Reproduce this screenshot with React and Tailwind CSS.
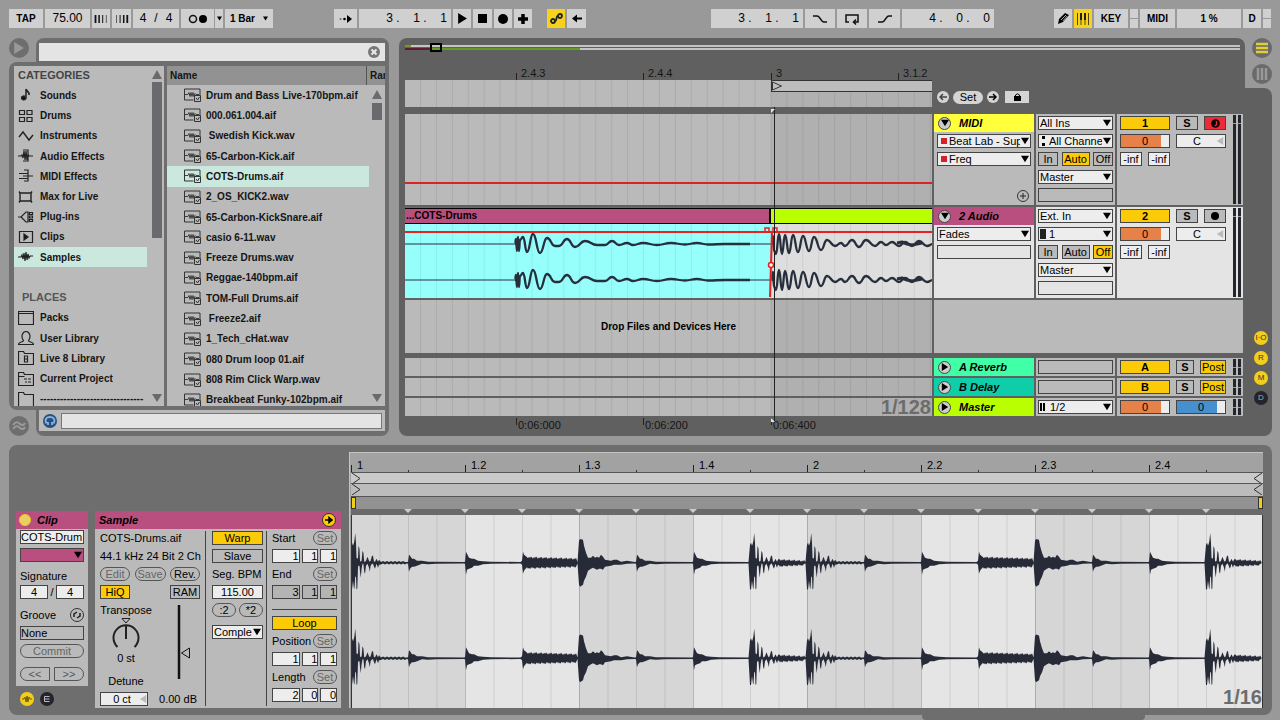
import clsx from 'clsx';

const FILES = [
    'Drum and Bass Live-170bpm.aif',
    '000.061.004.aif',
    '\u00a0Swedish Kick.wav',
    '65-Carbon-Kick.aif',
    'COTS-Drums.aif',
    '2_OS_KICK2.wav',
    '65-Carbon-KickSnare.aif',
    'casio 6-11.wav',
    'Freeze Drums.wav',
    'Reggae-140bpm.aif',
    'TOM-Full Drums.aif',
    '\u00a0Freeze2.aif',
    '1_Tech_cHat.wav',
    '080 Drum loop 01.aif',
    '808 Rim Click Warp.wav',
    'Breakbeat Funky-102bpm.aif',
];

const CATEGORIES = [
    ['Sounds', 'note'],
    ['Drums', 'pads'],
    ['Instruments', 'sine'],
    ['Audio Effects', 'audiofx'],
    ['MIDI Effects', 'midifx'],
    ['Max for Live', 'max'],
    ['Plug-ins', 'plug'],
    ['Clips', 'clip'],
    ['Samples', 'sample'],
];

const PLACES = [
    ['Packs', 'pack'],
    ['User Library', 'user'],
    ['Live 8 Library', 'folder8'],
    ['Current Project', 'project'],
    ['-------------------------------', 'folder'],
];

const ICONS = {
    note: <path d="M8 1v9M8 1c1 3 4 3 3 6M8 10a2.2 1.8 0 1 1-1-1.6" fill="#111" strokeWidth="1.5" />,
    pads: <path d="M1.5 1.5h5v4h-5zM9 1.5h5v4H9zM1.5 8.5h5v4h-5zM9 8.5h5v4H9z" />,
    sine: <path d="M1 8l4-5 6 8 4-5" strokeWidth="1.4" />,
    audiofx: <path d="M0 7h3l1-1 1 3 1-7 1 9 1-9 1 9 1-6 1 2h4M5 1h5v11H5" />,
    midifx: <path d="M1 4.500h9M5 7h10M1 9.500h9M6 1h4v11H6" />,
    max: <path d="M2 3h11v8H2zM2 3L1 1.500M13 3l1-1.500M2 11l-1 1.500M13 11l1 1.500" strokeWidth="1.400" />,
    plug: <path d="M0 7h3l5-5h2v10H8L3 7M11.500 2.500h3v2h-3zM11.500 6h3v2h-3zM11.500 9.500h3v2h-3z" strokeWidth="1.200" />,
    clip: (
        <>
            <path d="M1.500 1.500h13v11h-13z" />
            <path d="M6 4l4 3-4 3z" fill="#111" />
        </>
    ),
    sample: <path d="M0 7h3l1-2 1 4 1-6 1 8 1-9 1 8 1-6 1 4 1-2h3" />,
    pack: <path d="M.5 .5h15v13H.5zM.5 2.500h15" />,
    user: <path d="M.5 13.500h15c0-3-5-2-5-4 3-4 1-9-2.500-9s-5.500 5-2.500 9c0 2-5 1-5 4z" />,
    folder8: (
        <>
            <path d="M.5 13.500V.5h5l1 2h9v11z" />
            <path d="M6.500 5h3v6h-3zM6.500 8h3" />
        </>
    ),
    project: <path d="M.5 13.500V.5h5l1 2h9v11zM.5 4.500h6M6 7h3M10 7h3M7 10h2M10 10h3" />,
    folder: <path d="M.5 14V.5h5l1 2h9V14" />,
};

const Icon = ({ name }) => (
    <svg width="16" height="14" viewBox="0 0 16 14" fill="none" stroke="#222" strokeWidth="1.2" className="shrink-0">
        {ICONS[name]}
    </svg>
);

const FileIcon = () => (
    <svg width="18" height="14" viewBox="0 0 18 14" fill="none" stroke="#333" className="shrink-0">
        <path d="M.5 1h15.500v6M.5 1v11h9" />
        <path d="M1 6.500h3l1-2 1 4 1-4 1 4 1-4 1 4 1-3 1 1h3" strokeWidth=".9" />
        <path d="M10.500 7.500h6v6h-6zM12 10l1.500 2 2-3" />
    </svg>
);

const Triangle = ({ dir = 'down', className = 'size-[9px] fill-black' }) => {
    const d = { down: 'M0 1h10L5 9z', up: 'M0 9h10L5 0z', right: 'M1 0v10l8-5z', left: 'M9 0v10L1 5z' }[dir];
    return (
        <svg viewBox="0 0 10 10" className={clsx('shrink-0', className)}>
            <path d={d} />
        </svg>
    );
};

/* ---------- transport bar ---------- */

const Tb = ({ className, label, children, on }) => (
    <button
        aria-label={label}
        className={clsx('h-[19px] flex items-center justify-center text-[10px] font-bold shrink-0', on ? 'bg-[#f6d21c]' : 'bg-[#d0d0d0]', className)}
    >
        {children}
    </button>
);

const BeatField = ({ values }) => (
    <div className="h-[19px] w-[92px] bg-[#d0d0d0] flex justify-end text-[12px] leading-[19px] pr-1">
        <span className="w-[27px]">{values[0]} .</span>
        <span className="w-[27px]">{values[1]} .</span>
        <span>{values[2]}</span>
    </div>
);

const Stroke = ({ d, w = 16 }) => (
    <svg width={w} height="12" viewBox={`0 0 ${w} 12`} fill="none" stroke="#111" strokeWidth="1.5">
        <path d={d} />
    </svg>
);

const NudgeBars = ({ weights }) => (
    <svg width="14" height="10" viewBox="0 0 14 10" stroke="#111">
        {weights.map((w, i) => (
            <path key={i} d={`M${1.500 + i * 3.600} 1v8`} strokeWidth={w} />
        ))}
    </svg>
);

const SplitLed = () => (
    <div className="w-2 h-[19px] flex flex-col gap-px shrink-0">
        <i className="flex-1 bg-[#d0d0d0]" />
        <i className="flex-1 bg-[#d0d0d0]" />
    </div>
);

const Transport = () => (
    <header className="flex justify-between px-[9px] pt-[9px] pb-[10px]">
        <div className="flex gap-[61px]">
            <div className="flex gap-[2px]">
                <Tb className="w-[34px]">TAP</Tb>
                <div className="w-[45px] h-[19px] bg-[#d0d0d0] text-[12px] leading-[19px] text-center">75.00</div>
                <Tb label="Nudge down" className="w-[18px]">
                    <NudgeBars weights={[1.8, 1.5, 1, 0.6]} />
                </Tb>
                <Tb label="Nudge up" className="w-[19px]">
                    <NudgeBars weights={[0.6, 1, 1.5, 1.8]} />
                </Tb>
                <div className="w-[46px] h-[19px] bg-[#d0d0d0] text-[12px] leading-[19px] flex justify-center gap-2">
                    <span>4</span>
                    <span>/</span>
                    <span>4</span>
                </div>
                <div className="flex gap-px">
                    <Tb label="Metronome" className="w-[33px]">
                        <svg width="20" height="10" viewBox="0 0 20 10">
                            <circle cx="5" cy="5" r="3.500" fill="none" stroke="#111" strokeWidth="1.500" />
                            <circle cx="15" cy="5" r="4" />
                        </svg>
                    </Tb>
                    <Tb label="Metronome options" className="w-2">
                        <Triangle className="size-[5px] fill-black" />
                    </Tb>
                </div>
                <Tb className="w-[48px] gap-2">
                    1 Bar
                    <Triangle className="size-[5px] fill-black" />
                </Tb>
            </div>
            <div className="flex gap-[15px]">
                <div className="flex gap-[2px]">
                    <Tb label="Follow" className="w-[23px]">
                        <svg width="13" height="8" viewBox="0 0 13 8">
                            <path d="M8 0l5 4-5 4z" />
                            <circle cx="5.500" cy="4" r="1.300" />
                            <circle cx="1.500" cy="4" r="1" fill="#666" />
                        </svg>
                    </Tb>
                    <BeatField values={[3, 1, 1]} />
                    <Tb label="Play" className="w-[18px]">
                        <Triangle dir="right" className="size-[11px] fill-black" />
                    </Tb>
                    <Tb label="Stop" className="w-[19px]">
                        <i className="size-[9px] bg-black" />
                    </Tb>
                    <Tb label="Record" className="w-[18px]">
                        <i className="size-[10px] rounded-full bg-black" />
                    </Tb>
                    <Tb label="Overdub" className="w-[18px]">
                        <svg width="10" height="10" viewBox="0 0 10 10" stroke="#000" strokeWidth="3.500">
                            <path d="M5 0v10M0 5h10" />
                        </svg>
                    </Tb>
                </div>
                <div className="flex gap-[2px]">
                    <Tb on label="Automation arm" className="w-[18px]">
                        <svg width="13" height="11" viewBox="0 0 13 11" fill="none" stroke="#222" strokeWidth="1.800">
                            <circle cx="3" cy="8" r="2" />
                            <circle cx="10" cy="3" r="2" />
                            <path d="M5 8c2 0 1-5 3-5" />
                        </svg>
                    </Tb>
                    <Tb label="Back to arrangement" className="w-[19px]">
                        <svg width="10" height="9" viewBox="0 0 10 9">
                            <path d="M0 4.500L5 .5v3h5v2H5v3z" />
                        </svg>
                    </Tb>
                </div>
            </div>
        </div>
        <div className="flex gap-[60px]">
            <div className="flex gap-[2px]">
                <BeatField values={[3, 1, 1]} />
                <Tb label="Punch in" className="w-[30px]">
                    <Stroke d="M1 3h4q1 0 2 1l3 4q1 1 2 1h3" />
                </Tb>
                <Tb label="Loop" className="w-[30px]">
                    <Stroke d="M5 9H2V2h12v7h-4M12 6.500L9.500 9l2.500 2.500" />
                </Tb>
                <Tb label="Punch out" className="w-[31px]">
                    <Stroke d="M1 9h4q1 0 2-1l3-4q1-1 2-1h3" />
                </Tb>
                <BeatField values={[4, 0, 0]} />
            </div>
            <div className="flex gap-[2px]">
                <Tb label="Draw mode" className="w-[18px]">
                    <svg width="13" height="13" viewBox="0 0 13 13">
                        <path d="M1 12l1-5 6-6 4 2-6 7z" />
                        <path d="M4 8l5-5M6 9l4-5" stroke="#ccc" strokeWidth=".8" />
                    </svg>
                </Tb>
                <Tb on label="Computer MIDI keyboard" className="w-[18px]">
                    <svg width="12" height="12" viewBox="0 0 12 12" stroke="#222">
                        <path d="M.5 0v12M4 6v6M8 6v6M11.500 0v12" strokeWidth=".8" />
                        <path d="M4 0v7M8 0v7" strokeWidth="2" />
                    </svg>
                </Tb>
                <Tb className="w-[34px]">KEY</Tb>
                <SplitLed />
                <Tb className="w-[35px]">MIDI</Tb>
                <div className="w-[64px] h-[19px] bg-[#d0d0d0] text-[10px] font-bold leading-[19px] text-center">1 %</div>
                <Tb className="w-[18px]">D</Tb>
                <SplitLed />
            </div>
        </div>
    </header>
);

/* ---------- browser ---------- */

const NavRow = ({ item, active }) => (
    <li className={clsx('flex items-center gap-[6px] pl-1 mr-[14px]', active && 'bg-[#cbe8df]')}>
        <Icon name={item[1]} />
        <a href="#" className="whitespace-nowrap">{item[0]}</a>
    </li>
);

const Browser = () => (
    <aside className="w-[380px] shrink-0 flex flex-col text-[10px] font-bold text-[#151515]">
        <div className="flex justify-between">
            <button aria-label="Show browser" className="size-5 rounded-full bg-[#6e6e6e] flex items-center justify-center">
                <Triangle dir="right" className="size-3 fill-[#999]" />
            </button>
            <div className="w-[353px] bg-[#6e6e6e] rounded-t-lg pt-[5px] px-[3px] h-[24px] pr-[4px]">
                <div className="relative">
                    <input aria-label="Search" className="block w-full h-[18px] bg-[#e4e4e4] px-2" />
                    <button aria-label="Clear search" className="absolute right-[5px] top-[3px] size-3 rounded-full bg-[#777]">
                        <svg viewBox="0 0 12 12" stroke="#eee" strokeWidth="1.800">
                            <path d="M3.500 3.500l5 5M8.500 3.500l-5 5" />
                        </svg>
                    </button>
                </div>
            </div>
        </div>
        <div className="flex bg-[#6e6e6e] rounded-l-lg py-1 pl-[5px] pr-[4px] gap-[3px]">
            <nav className="w-[150px] h-[340px] bg-[#bababa] flex overflow-hidden">
                <ul className="flex-1 min-w-0 h-[344px] -mt-px grid auto-rows-fr mr-[-12px]">
                    <li className="flex items-center pl-1 text-[11px] text-[#444]">CATEGORIES</li>
                    {CATEGORIES.map((c) => <NavRow key={c[0]} item={c} active={c[0] === 'Samples'} />)}
                    <li />
                    <li className="flex items-center pl-2 text-[11px] text-[#555]">PLACES</li>
                    {PLACES.map((c) => <NavRow key={c[0]} item={c} />)}
                </ul>
                <div className="w-[15px] flex flex-col items-center pt-1 pb-[3px]">
                    <Triangle dir="up" className="size-[10px] fill-[#6a6a6e]" />
                    <i className="mt-[2px] w-[10px] h-[156px] bg-[#6a6a6e]" />
                    <Triangle className="mt-auto size-[10px] fill-[#6a6a6e]" />
                </div>
            </nav>
            <div className="flex-1 h-[340px] bg-[#bababa] overflow-hidden">
                <div className="flex h-[19px] leading-[20px] bg-[#929292]">
                    <span className="flex-1 pl-[3px]">Name</span>
                    <span className="w-[19px] pl-[3px] border-l border-[#555] overflow-hidden">Ran</span>
                </div>
                <div className="flex h-[321px]">
                    <ul className="flex-1 h-[325px] grid auto-rows-fr">
                        {FILES.map((f) => (
                            <li key={f} className={clsx('flex items-center gap-1 pl-[17px] whitespace-nowrap', f === 'COTS-Drums.aif' && 'bg-[#cbe8df]')}>
                                <FileIcon />
                                {f}
                            </li>
                        ))}
                    </ul>
                    <div className="w-[16px] flex flex-col items-center pt-[5px] pb-[3px]">
                        <Triangle dir="up" className="size-[10px] fill-[#6a6a6e]" />
                        <i className="mt-[3px] w-[10px] h-[17px] bg-[#6a6a6e]" />
                        <Triangle className="mt-auto size-[10px] fill-[#6a6a6e]" />
                    </div>
                </div>
            </div>
        </div>
        <div className="flex justify-between items-end">
            <button aria-label="Groove pool" className="size-5 rounded-full bg-[#6e6e6e]">
                <svg viewBox="0 0 20 20" fill="none" stroke="#999" strokeWidth="2">
                    <path d="M4 9c3-4 5-3 7-1s4 1 5-1M4 13c3-4 5-3 7-1s4 1 5-1" />
                </svg>
            </button>
            <div className="w-[353px] bg-[#6e6e6e] rounded-b-lg pb-[5px] pl-[3px] pr-[4px]">
                <div className="h-[21px] bg-[#bababa] flex items-center gap-1 pl-[4px] pr-[3px]">
                    <button aria-label="Preview" className="size-[14px] rounded-full bg-[#2c4e78]">
                        <svg viewBox="0 0 14 14" fill="none" stroke="#7fb6e8" strokeWidth="1.800">
                            <path d="M3.500 9.500C1 5 4 3 7 3s6 2 3.500 6.500M5 8v3M9 8v3" />
                        </svg>
                    </button>
                    <input aria-label="Preview file" className="flex-1 h-4 bg-[#e4e4e4] border border-[#777]" />
                </div>
            </div>
        </div>
    </aside>
);

/* ---------- arrangement ---------- */

// Horizontal-tangent curve through [x, dy] extremes around a centre line.
const curve = (pts, mid) => pts.reduce((d, [x, dy], i) => {
    const y = mid + dy;
    if (i === 0) return `M${x} ${y}`;
    const [px, pdy] = pts[i - 1];
    const cx = (px + x) / 2;
    return `${d}C${cx} ${mid + pdy} ${cx} ${y} ${x} ${y}`;
}, '');

const TAIL = [[110, 0], [111, -5], [112, 7], [113, -7], [114, 7], [115, -4], [118, -7], [122, 8], [128, -10], [135, 9], [142, -6], [150, 2], [154, 2], [162, -5], [170, 3], [180, -3], [192, 1], [200, 1], [207, -3], [214, 1], [222, -1], [228, 1], [238, -1], [252, 1], [266, -1], [280, 0.500], [292, -1], [303, 0.500], [320, 0], [345, 0]];
const HEAD = [[0, 0], [1, -8], [2, 7], [4, 10], [7, -10], [10, 10], [13, -9], [17, 9], [21, -9], [26, 8], [31, -8], [37, 7], [42, -7], [49, 6], [55, -4], [63, 2], [69, -1], [73, 2], [80, -4], [87, 3], [94, -4], [103, 2], [109, -2], [114, 1], [120, -2], [127, 2], [133, -2], [140, 2], [147, -3], [155, 2], [161, 0]];

const LaneGrid = () => (
    <svg viewBox="0 0 527 10" preserveAspectRatio="none" className="absolute inset-0 w-full h-full" stroke="#000" strokeOpacity=".08">
        <rect x="366" width="161" height="10" fillOpacity=".05" stroke="none" />
        {Array.from({ length: 33 }, (_, i) => (
            <path key={i} d={`M${15.500 + i * 15.930} 0v10`} />
        ))}
    </svg>
);

const Lane = ({ children, className }) => (
    <div className={clsx('relative flex-1 min-w-0 bg-[#bababa]', className)}>
        <LaneGrid />
        {children}
    </div>
);

const Pick = ({ label, value, mark, className = 'bg-[#ededed]', pad = 'pl-px' }) => (
    <span className="relative block h-[14px]">
        <select aria-label={label} className={clsx('block w-full h-full appearance-none border border-[#444] text-[11px] leading-[12px] pr-[10px] outline-none', pad, className)}>
            <option>{value}</option>
        </select>
        {mark}
        <Triangle className="absolute right-[2px] top-[3px] size-2 fill-black pointer-events-none" />
    </span>
);

const Tog = ({ children, on, className, label }) => (
    <button
        aria-label={label}
        className={clsx('h-[14px] border border-[#444] text-[11px] leading-[12px] flex items-center justify-center', on ? 'bg-[#fbcb07]' : 'bg-[#bababa]', className)}
    >
        {children}
    </button>
);

const Num = ({ label, value, className = 'bg-[#ededed] text-center' }) => (
    <input aria-label={label} defaultValue={value} className={clsx('h-[14px] min-w-0 border border-[#444] text-[11px] leading-[12px]', className)} />
);

const ORANGE = 'w-[50px] text-center bg-[linear-gradient(to_right,#e68249_84%,#ededed_84%)]';
const BLUE = 'w-[50px] text-center bg-[linear-gradient(to_right,#4690d0_84%,#ededed_84%)]';

const Meter = () => (
    <div className="ml-auto w-2 flex gap-[2px] py-px">
        {[0, 1].map((ch) => (
            <div key={ch} className="flex-1 bg-[#22252c] pt-2">
                <i className="block h-px bg-[#999]" />
            </div>
        ))}
    </div>
);

const TrackTitle = ({ name, color, dir = 'down' }) => (
    <div className={clsx('h-[18px] flex items-center pl-1 gap-2', color)}>
        <button aria-label={`Unfold ${name}`} className="size-[13px] rounded-full bg-[#ccc] border border-[#444] flex items-center justify-center">
            <Triangle dir={dir} className="size-2 fill-black" />
        </button>
        <span className="text-[11px] font-bold italic">{name}</span>
    </div>
);

const RedMark = () => <i className="absolute left-1 top-1 size-[6px] bg-[#d3222a] pointer-events-none" />;

const Track = ({ name, n, color, input, channel, chMark, monitor, bg, lane, arm, armColor, children }) => (
    <section className="flex gap-[2px] h-[91px]">
        {lane}
        <div className={clsx('w-[100px] flex flex-col', bg)}>
            <TrackTitle name={name} color={color} />
            <div className="flex-1 flex flex-col gap-1 pt-[2px] px-[3px] pb-[3px]">{children}</div>
        </div>
        <div className={clsx('w-[79px] flex flex-col gap-1 pt-[2px] px-[2px]', bg)}>
            <Pick label={`${name} input type`} value={input} />
            <Pick label={`${name} input channel`} value={channel} pad="pl-[10px]" mark={chMark} />
            <div className="flex justify-between">
                {['In', 'Auto', 'Off'].map((m) => (
                    <Tog key={m} on={m === monitor} className={m === 'Auto' ? 'w-[28px]' : 'w-5'}>{m}</Tog>
                ))}
            </div>
            <Pick label={`${name} output`} value="Master" />
            <Num label={`${name} output channel`} className="bg-transparent" />
        </div>
        <div className={clsx('w-[126px] flex px-[3px] pr-[2px]', bg)}>
            <div className="flex flex-col gap-1 pt-[2px]">
                <div className="flex gap-[6px]">
                    <Tog on className="w-[50px] font-bold">{n}</Tog>
                    <Tog className="w-[22px] font-bold">S</Tog>
                    <Tog label="Arm" className={clsx('w-[22px]', armColor)}>{arm}</Tog>
                </div>
                <div className="flex gap-[6px]">
                    <Num label={`${name} volume`} value="0" className={ORANGE} />
                    <span className="relative flex">
                        <Num label={`${name} pan`} value="C" className="w-[50px] bg-[#ededed] text-center pr-2" />
                        <Triangle dir="left" className="absolute right-[2px] top-[3px] size-2 fill-[#bbb]" />
                    </span>
                </div>
                <div className="flex gap-[6px]">
                    <Num label={`${name} send A`} value="-inf" className="w-[22px] bg-[#ededed] text-center" />
                    <Num label={`${name} send B`} value="-inf" className="w-[22px] bg-[#ededed] text-center" />
                </div>
            </div>
            <Meter />
        </div>
    </section>
);

const SlimTrack = ({ name, color, io, mixer, lane }) => (
    <section className="flex gap-[2px] h-[18px]">
        <Lane>{lane}</Lane>
        <div className="w-[100px]"><TrackTitle name={name} color={color} dir="right" /></div>
        <div className="w-[79px] bg-[#bababa] px-[2px] py-[2px]">{io}</div>
        <div className="w-[126px] bg-[#bababa] flex items-center px-[3px] pr-[2px] gap-[6px]">
            {mixer}
            <div className="ml-auto self-stretch flex"><Meter /></div>
        </div>
    </section>
);

const RulerCells = ({ labels, className, gap }) => (
    <div className={clsx('grid grid-cols-[111fr_127fr_128fr_127fr_34fr] text-[11px] text-[#151515]', className)}>
        {labels.map((l, i) => (
            <div key={i} className={clsx('flex min-w-0 whitespace-nowrap', gap)}>
                {l && <i className="mt-[7px] w-px h-[7px] bg-[#222]" />}
                {l}
            </div>
        ))}
    </div>
);

const RoundBtn = ({ label, children }) => (
    <button aria-label={label} className="size-3 rounded-full bg-[#d4d4d4] flex items-center justify-center">{children}</button>
);

const CircleTag = ({ children, dark }) => (
    <button className={clsx('size-[14px] rounded-full text-[8px] leading-[14px] text-center', dark ? 'bg-[#22252c] text-[#aaa]' : 'bg-[#f2ce1c] text-[#333]')}>
        {children}
    </button>
);

const AudioLane = () => (
    <div className="flex-1 min-w-0 flex flex-col bg-[#4e7777] pt-px">
        <div className="grid grid-cols-[366fr_161fr] h-4 text-[10px] font-bold leading-[14px]">
            <div className="bg-[#b84f7e] border-y border-r-2 border-black pl-px">...COTS-Drums</div>
            <div className="bg-[#b9ff02] border-y border-black" />
        </div>
        <svg viewBox="0 0 527 74" preserveAspectRatio="none" className="w-full flex-1 min-h-0">
            <rect width="366" height="74" fill="#96fffc" />
            <rect x="366" width="161" height="74" fill="#dedede" />
            {Array.from({ length: 33 }, (_, i) => (
                <path key={i} d={`M${15.500 + i * 15.930} 0v74`} stroke="#000" strokeOpacity=".07" />
            ))}
            {[20, 56].map((y) => (
                <g key={y} fill="none" stroke="#272f3d" strokeWidth="2.3" strokeLinejoin="round">
                    <path d={`M0 ${y}h110M345 ${y}h22`} strokeWidth="1" />
                    <path d={curve(TAIL, y)} />
                    <path d={curve(HEAD.map(([x, dy]) => [x + 367, dy]), y)} />
                    <path d={`M492 ${y - 1}l5-1 5 2 5 1 5-1 5-1`} strokeWidth="3" />
                </g>
            ))}
            <g fill="none" stroke="#ea1f1f" strokeWidth="1.500">
                <path d="M0 8h527" strokeWidth="2" />
                <path d="M367 8L365 73" strokeWidth="2" />
                <path d="M360 4h4v4h-4zM368 4h4v4h-4z" />
                <circle cx="366" cy="41" r="2.500" fill="#fff" />
            </g>
        </svg>
    </div>
);

const Arrangement = () => (
    <main className="flex-1 min-w-0 flex">
        <div className="flex-1 min-w-0 bg-[#606060] rounded-l-lg rounded-tr-lg pl-[6px] pr-[2px] flex flex-col">
            <div className="relative h-[28px] pt-[7px] pr-[3px]">
                <div className="h-[2px] bg-[#c4c4c4] flex">
                    <i className="w-[6px] bg-[#86902c]" />
                </div>
                <div className="h-[2px] mt-px bg-[#c4c4c4] flex">
                    <i className="w-[3%] bg-[#5f1c30]" />
                    <i className="w-[18%] bg-[#639c20]" />
                </div>
                <div className="absolute left-[3%] top-[5px] w-3 h-[9px] border-2 border-black" />
            </div>
            <RulerCells labels={['', '2.4.3', '2.4.4', '3', '3.1.2']} gap="gap-1" className="h-[14px] leading-[14px] mr-[311px]" />
            <div className="relative flex flex-col">
                <div className="flex gap-[2px] h-[27px] mb-[7px]">
                    <div className="relative flex-1 min-w-0 bg-[#bababa]">
                        <LaneGrid />
                        <div className="relative grid grid-cols-[366fr_161fr]">
                            <i />
                            <div className="h-3 border border-r-0 border-[#333] bg-[#bdbdbd]">
                                <svg width="11" height="10" fill="none" stroke="#333">
                                    <path d="M.5 1l9 4-9 4z" />
                                </svg>
                            </div>
                        </div>
                    </div>
                    <div className="w-[309px] flex items-center gap-1 pl-[3px] pt-[7px]">
                        <RoundBtn label="Previous locator">
                            <svg width="8" height="8" stroke="#444" fill="none" strokeWidth="1.500"><path d="M8 4H1M4 1L1 4l3 3" /></svg>
                        </RoundBtn>
                        <button className="w-[30px] h-[13px] rounded-full bg-[#d4d4d4] text-[11px] leading-[13px]">Set</button>
                        <RoundBtn label="Next locator">
                            <svg width="8" height="8" stroke="#000" fill="none" strokeWidth="1.500"><path d="M0 4h7M4 1l3 3-3 3" /></svg>
                        </RoundBtn>
                        <button aria-label="Lock envelopes" className="ml-[2px] w-6 h-3 bg-[#d4d4d4] flex items-center justify-center">
                            <svg width="7" height="8"><path d="M0 3h7v5H0z" /><path d="M1.500 4V2q2-2.500 4 0v2" fill="none" stroke="#000" /></svg>
                        </button>
                    </div>
                </div>

                <Track
                    name="MIDI" n="1" color="bg-[#ffff3c]" bg="bg-[#bababa]" input="All Ins" channel="All Channe" monitor="Auto"
                    chMark={<i className="absolute left-1 top-[2px] h-[10px] border-l-3 border-dotted border-black" />}
                    armColor="bg-[#ee2a34]!"
                    arm={<svg width="9" height="9"><circle cx="4.500" cy="4.500" r="4.300" /><path d="M5.500 2v4M3.500 6.500h2" stroke="#ee2a34" strokeWidth="1.500" /></svg>}
                    lane={(
                        <Lane className="flex flex-col">
                            <i className="absolute inset-x-0 top-[68px] h-[2px] bg-[#dd2226]" />
                        </Lane>
                    )}
                >
                    <Pick label="Automated device" value="Beat Lab - Sup" pad="pl-[11px]" mark={<RedMark />} />
                    <Pick label="Automated control" value="Freq" pad="pl-[11px]" mark={<RedMark />} />
                    <button aria-label="Add automation lane" className="mt-auto ml-auto mr-[2px] size-3 rounded-full border border-[#333]">
                        <svg viewBox="0 0 10 10" stroke="#222"><path d="M5 2v6M2 5h6" /></svg>
                    </button>
                </Track>
                <div className="h-[2px]" />
                <Track
                    name="2 Audio" n="2" color="bg-[#b84f7e]" bg="bg-[#e4e4e4]" input="Ext. In" channel="1" monitor="Off"
                    chMark={<i className="absolute left-[2px] top-[2px] w-[6px] h-[10px] bg-[#222]" />}
                    arm={<i className="size-2 rounded-full bg-black" />}
                    lane={<AudioLane />}
                >
                    <Pick label="Automated device" value="Fades" />
                    <Num label="Automated control" className="bg-transparent" />
                </Track>

                <div className="flex gap-[2px] h-[53px] mt-[2px] mb-[5px]">
                    <Lane className="flex items-center justify-center">
                        <span className="relative text-[10px] font-bold">Drop Files and Devices Here</span>
                    </Lane>
                    <div className="w-[309px] bg-[#bababa]" />
                </div>

                <div className="flex flex-col gap-[2px]">
                    {[['A Reverb', 'A', 'bg-[#41ffa6]'], ['B Delay', 'B', 'bg-[#10cda9]']].map(([name, key, color]) => (
                        <SlimTrack
                            key={name} name={name} color={color}
                            io={<Num label={`${name} routing`} className="block w-full bg-transparent" />}
                            mixer={(
                                <>
                                    <Tog on className="w-[50px] font-bold">{key}</Tog>
                                    <Tog className="w-[18px] font-bold">S</Tog>
                                    <Tog on className="w-[26px]">Post</Tog>
                                </>
                            )}
                        />
                    ))}
                    <SlimTrack
                        name="Master" color="bg-[#b9ff02]"
                        io={<Pick label="Master output" value="1/2" pad="pl-[11px]" mark={<i className="absolute left-[2px] top-[3px] w-[5px] h-2 border-x-2 border-black" />} />}
                        mixer={(
                            <>
                                <Num label="Master volume" value="0" className={ORANGE} />
                                <Num label="Cue volume" value="0" className={BLUE} />
                            </>
                        )}
                        lane={<span className="absolute right-px top-0 text-[20px] leading-[18px] font-bold text-[#6c6c6c]">1/128</span>}
                    />
                </div>
                <RulerCells labels={['', '0:06:000', '0:06:200', '0:06:400', '']} gap="gap-px" className="h-5 leading-[18px] mr-[311px] [&_i]:mt-[2px]" />

                {/* playhead */}
                <div className="absolute top-[27px] bottom-[14px] left-0 right-[311px] pointer-events-none">
                    <div className="absolute inset-y-0 left-[70%] w-px bg-[#222]" />
                    <div className="absolute top-[2px] left-[69.4%] border-2 border-transparent border-t-[#c8f5e6] border-l-[#c8f5e6] size-0" />
                    <div className="absolute bottom-0 left-[69.4%] border-2 border-transparent border-b-[#c8f5e6] border-l-[#c8f5e6] size-0" />
                </div>
            </div>
        </div>

        <div className="w-[27px] flex flex-col">
            <div className="h-[50px] flex flex-col items-end gap-[6px]">
                <button aria-label="Arrangement view" className="size-5 rounded-full bg-[#6a6a6a]">
                    <svg viewBox="0 0 20 20" stroke="#e2cd3a" strokeWidth="2.500"><path d="M4 6h12M4 10h12M4 14h12" /></svg>
                </button>
                <button aria-label="Session view" className="size-5 rounded-full bg-[#6a6a6a]">
                    <svg viewBox="0 0 20 20" stroke="#999" strokeWidth="2.500"><path d="M6 4v12M10 4v12M14 4v12" /></svg>
                </button>
            </div>
            <div className="flex-1 bg-[#606060] rounded-r-lg flex flex-col justify-end items-end gap-[6px] pr-1 pb-[31px]">
                <CircleTag>I·O</CircleTag>
                <CircleTag>R</CircleTag>
                <CircleTag>M</CircleTag>
                <CircleTag dark>D</CircleTag>
            </div>
        </div>
    </main>
);

/* ---------- clip view ---------- */

const jitter = (i, n) => ((i * 7) % 5) * n;

// [dx, up, down] envelopes for each kind of hit in the loop
const KICK = [[0, 18, 27], [1, 20, 27], [2, 17, 18], [3, 20, 26], [3.500, 23, 26], [4.200, 30, 14], [5, 20, 14], [5.500, 5, 27], [6.300, 4, 26], [7, 5, 4], [7.500, 17, 3], [8.500, 14, 3], [9, 2, 9], [9.800, 1, 15], [10.600, 2, 6], [11.500, 12, 1], [12.400, 10, 1], [13.200, 1, 9], [14, 1, 11], [15, 2, 3], [16.500, 6, 1], [18, 2, 5], [18.800, 1, 9], [19.600, 2, 3], [21, 7, 1], [22, 7, 1], [23, 1, 4], [24, 1, 6], [25.500, 4, 1], [27, 1, 5], [28, 3, 2]];
const WIGGLE = Array.from({ length: 13 }, (_, i) => [30 + i * 2, 0.700 + (i % 2), 0.700 + ((i + 1) % 2)]);
const ROLL = Array.from({ length: 26 }, (_, i) => [29 + i, 4 - i * 0.050 - jitter(i, 0.500), 4.500 - i * 0.050 - jitter(i + 2, 0.500)]);
const HAT = [[0, 1, 1], [1, 8, 9], [2, 7, 6], [4, 4, 4], [6, 4, 4], [9, 2, 3], [14, 2, 1], [20, 1, 1.500], [28, 1, 1]];
const HAT2 = [[0, 1, 1], [1, 11, 12], [2, 9, 7], [4, 5, 6], [7, 4, 5], [9, 4, 3], [13, 2, 3], [18, 1.500, 1.500], [26, 1, 1]];
const BASS = [[0, 2, 2], [1, 11, 11], [2, 8, 8], ...Array.from({ length: 51 }, (_, i) => [4 + i, 6.500 - i * 0.030 - jitter(i, 0.500), 6.500 - i * 0.030 - jitter(i + 1, 0.500)])];
const SNARE = [[0, 22, 22], [1, 24, 24], [4, 23, 22], [5, 17, 18], [7, 10, 14], [9, 5, 8], [12, 5, 6], [14, 7, 5], [16, 5, 6], [18, 6, 7], [20, 5, 6], [22, 8, 6], [24, 6, 7], [26, 3, 4], [32, 2, 3], [35, 3, 2], [38, 3, 2], [42, 1, 2], [48, 2, 1]];
const LOOP = [[...KICK, ...WIGGLE], HAT, HAT2, BASS, SNARE, HAT, HAT2, [...KICK, ...ROLL]];

const envelope = (mid) => {
    const pts = [...LOOP, ...LOOP].flatMap((hit, i) => [...hit, [55.500, 0.800, 0.800]].map(([dx, up, down]) => [i * 57 + dx, up, down]));
    const top = pts.map(([x, up]) => `${x},${mid - up}`);
    const bottom = pts.map(([x, , down]) => `${x},${mid + down}`).reverse();
    return [...top, ...bottom].join(' ');
};

const Pill = ({ children, className = 'text-[#666]', label }) => (
    <button aria-label={label} className={clsx('h-[14px] rounded-full border border-[#555] text-[11px] leading-[12px] flex items-center justify-center', className)}>
        {children}
    </button>
);

const SetRow = ({ label }) => (
    <div className="flex justify-between h-[14px] leading-[14px]">
        <span>{label}</span>
        <Pill className="w-6 text-[#666]">Set</Pill>
    </div>
);

const Triple = ({ label, values, off }) => (
    <div className="flex gap-[2px]">
        {values.map((v, i) => (
            <Num key={i} label={`${label} ${i + 1}`} value={v} className={clsx('text-right', i === 0 ? 'w-[28px]' : 'w-[17px]', off ? 'bg-[#b4b4b4]' : 'bg-[#ededed]')} />
        ))}
    </div>
);

const ClipBox = () => (
    <section className="w-[72px] bg-[#bababa] pb-[5px]">
        <h2 className="h-[18px] bg-[#b84f7e] flex items-center gap-[6px] pl-[3px] font-bold italic">
            <button aria-label="Clip activator" className="size-3 rounded-full bg-[#e9cf63] border border-[#f2ce1c]" />
            Clip
        </h2>
        <div className="px-1 pt-px flex flex-col">
            <Num label="Clip name" value="COTS-Drum" className="w-full bg-[#ededed]" />
            <div className="mt-1"><Pick label="Clip color" value="" className="bg-[#b84f7e]" /></div>
            <span className="mt-[7px] h-[14px] leading-[14px]">Signature</span>
            <div className="mt-[2px] flex justify-between leading-[14px]">
                <Num label="Numerator" value="4" className="w-[28px] text-center bg-[#ededed]" />
                /
                <Num label="Denominator" value="4" className="w-[28px] text-center bg-[#ededed]" />
            </div>
            <div className="mt-[9px] h-[14px] leading-[14px] flex justify-between">
                Groove
                <button aria-label="Hot-swap groove" className="size-[14px] rounded-full border border-[#333]">
                    <svg viewBox="0 0 12 12" fill="none" stroke="#222" strokeWidth="1.500"><path d="M3 8V5l3-2M9 4v3L6 9" /></svg>
                </button>
            </div>
            <Num label="Groove" value="None" className="mt-1 bg-transparent" />
            <Pill className="mt-1 text-[#666]">Commit</Pill>
            <div className="mt-[9px] flex justify-between text-[#555]">
                <Pill className="w-[30px] rounded-r-none">&lt;&lt;</Pill>
                <Pill className="w-[30px] rounded-l-none">&gt;&gt;</Pill>
            </div>
        </div>
    </section>
);

const SampleBox = () => (
    <section className="w-[246px] bg-[#bababa]">
        <h2 className="h-[18px] bg-[#b84f7e] flex items-center justify-between pl-1 pr-[5px] font-bold italic">
            Sample
            <button aria-label="Jump to clip" className="size-[14px] rounded-full bg-[#fbcb07] border border-[#333] flex items-center justify-center">
                <svg width="8" height="8" stroke="#000" strokeWidth="1.500"><path d="M0 4h4" /><path d="M4 1.500L7 4 4 6.500z" /></svg>
            </button>
        </h2>
        <div className="flex pl-[5px] pr-1 pt-[2px] pb-[2px] h-[179px]">
            <div className="w-[100px] flex flex-col gap-1 leading-[14px] whitespace-nowrap">
                <span>COTS-Drums.aif</span>
                <span>44.1 kHz 24 Bit 2 Ch</span>
                <div className="flex justify-between">
                    <Pill className="w-[30px] text-[#666]">Edit</Pill>
                    <Pill className="w-[31px] text-[#666]">Save</Pill>
                    <Pill className="w-[30px] text-black">Rev.</Pill>
                </div>
                <div className="flex justify-between">
                    <Tog on className="w-[30px]">HiQ</Tog>
                    <Tog className="w-[30px]">RAM</Tog>
                </div>
                <div className="flex flex-1">
                    <div className="w-[52px] flex flex-col items-center">
                        <span>Transpose</span>
                        <svg width="30" height="34" viewBox="0 0 30 34" fill="none" stroke="#222" strokeWidth="2">
                            <path d="M6.500 30a12.500 12.500 0 1 1 17 0M15 9v13" />
                            <path d="M11 1.500h8l-4 4.500z" strokeWidth="1" />
                        </svg>
                        <span>0 st</span>
                        <span className="mt-auto">Detune</span>
                    </div>
                    <svg width="44" height="78" viewBox="0 0 44 78" fill="none" stroke="#111" className="ml-1">
                        <path d="M23 2v74" strokeWidth="2.500" />
                        <path d="M25.500 50l8-5v10z" />
                    </svg>
                </div>
                <div className="flex justify-between">
                    <span className="relative flex">
                        <Num label="Detune" value="0 ct" className="w-[48px] bg-[#ededed] text-center pr-1" />
                        <Triangle dir="left" className="absolute right-px top-[3px] size-2 fill-[#bbb]" />
                    </span>
                    <span className="pr-[3px]">0.00 dB</span>
                </div>
            </div>
            <i className="w-px bg-[#444] ml-[5px] mr-[6px]" />
            <div className="w-[51px] flex flex-col gap-1 leading-[14px]">
                <Tog on>Warp</Tog>
                <Tog>Slave</Tog>
                <span className="whitespace-nowrap">Seg. BPM</span>
                <Num label="Segment BPM" value="115.00" />
                <div className="flex justify-between">
                    <Pill className="w-6 text-black">:2</Pill>
                    <Pill className="w-6 text-black">*2</Pill>
                </div>
                <div className="mt-1"><Pick label="Warp mode" value="Comple" /></div>
            </div>
            <i className="w-px bg-[#444] ml-[3px] mr-[5px]" />
            <div className="flex-1 min-w-0 flex flex-col gap-1 leading-[14px]">
                <SetRow label="Start" />
                <Triple label="Start" values={[1, 1, 1]} />
                <SetRow label="End" />
                <Triple label="End" values={[3, 1, 1]} off />
                <i className="mt-[6px] mb-[2px] h-px bg-[#444]" />
                <Tog on>Loop</Tog>
                <SetRow label="Position" />
                <Triple label="Position" values={[1, 1, 1]} />
                <SetRow label="Length" />
                <Triple label="Length" values={[2, 0, 0]} />
            </div>
        </div>
    </section>
);

const LoopStrip = ({ className }) => (
    <div className={clsx('flex justify-between border-t border-[#555]', className)}>
        <svg width="10" height="11" fill="none" stroke="#333"><path d="M1 0l8 5.500-8 5.500" /></svg>
        <svg width="10" height="11" fill="none" stroke="#333"><path d="M9 0L1 5.500 9 11" /></svg>
    </div>
);

const SampleEditor = () => (
    <section className="flex-1 min-w-0 flex flex-col bg-[#a2a2a2] border-l border-t border-[#c4c4c4] pl-px text-[11px]">
        <div className="h-[19px] grid grid-cols-8">
            {['1', '1.2', '1.3', '1.4', '2', '2.2', '2.3', '2.4'].map((l) => (
                <div key={l} className="flex items-end gap-[5px] leading-[14px]">
                    <i className="w-px h-[7px] bg-[#222]" />
                    {l}
                    <i className="ml-auto w-1/2 h-[2px] border-l border-[#333]" />
                </div>
            ))}
        </div>
        <LoopStrip className="h-[11px] bg-[#cacaca]" />
        <LoopStrip className="h-[13px] bg-[#bcbcbc]" />
        <div className="flex justify-between h-[13px] bg-[#929292] border-t border-[#555]">
            <i className="w-[5px] bg-[#f2ce1c] border border-[#333]" />
            <i className="w-[5px] bg-[#f2ce1c] border border-[#333]" />
        </div>
        <div className="grid grid-cols-16 h-[6px] bg-[#6a6a6a]">
            {Array.from({ length: 16 }, (_, i) => (
                <i key={i} className={clsx('-ml-1 size-0 border-4 border-b-0 border-transparent', i > 0 && 'border-t-[#ccc]')} />
            ))}
        </div>
        <div className="relative flex-1 min-h-[193px]">
            <svg viewBox="0 0 912 194" preserveAspectRatio="none" className="absolute inset-0 w-full h-full">
                {Array.from({ length: 8 }, (_, i) => (
                    <rect key={i} x={i * 114} width="114" height="194" fill={i % 2 ? '#e5e5e5' : '#d6d6d6'} />
                ))}
                {Array.from({ length: 32 }, (_, i) => (
                    <path key={i} d={`M${i * 28.500 + 0.500} 0v194`} stroke="#000" strokeOpacity={i % 4 ? '.1' : '.2'} />
                ))}
                <polygon points={envelope(48)} fill="#272b38" />
                <polygon points={envelope(144)} fill="#272b38" />
                <path d="M.5 0v194M911.500 0v194" stroke="#333" />
            </svg>
            <span className="absolute right-px bottom-0 text-[20px] leading-[22px] font-bold text-[#6c6c6c]">1/16</span>
        </div>
    </section>
);

const ClipView = () => (
    <div className="mx-[9px] mr-2 mt-[9px] bg-[#6e6e6e] rounded-lg pl-[7px] pr-[9px] pt-[7px] pb-[7px] flex gap-2 h-[270px]">
        <div className="flex items-end gap-[7px] text-[11px]">
            <div>
                <ClipBox />
                <div className="h-[22px] flex items-center gap-[6px] pl-1 pt-1">
                    <button aria-label="Sample display" className="size-[14px] rounded-full bg-[#f2ce1c]">
                        <svg viewBox="0 0 14 14" fill="none" stroke="#6a5a10"><path d="M2 7h2l1-2 1 5 1-6 1 6 1-5 1 2h2" /></svg>
                    </button>
                    <button aria-label="Envelopes" className="size-[14px] rounded-full bg-[#22252c]">
                        <svg viewBox="0 0 14 14" fill="none" stroke="#bbb"><path d="M9.500 4.500h-5v5h5M4.500 7h5" /></svg>
                    </button>
                </div>
            </div>
            <SampleBox />
        </div>
        <SampleEditor />
    </div>
);

export default function App() {
    return (
        <div className="min-h-screen min-w-[1100px] bg-[#999] flex flex-col font-['Liberation_Sans',Arial,sans-serif] text-black">
            <Transport />
            <div className="flex gap-[10px] pl-[9px] pr-2">
                <Browser />
                <Arrangement />
            </div>
            <ClipView />
            <footer className="flex justify-end pr-[135px]">
                <i className="w-[223px] h-[5px] bg-[#6e6e6e] rounded-b-sm" />
            </footer>
        </div>
    );
}
